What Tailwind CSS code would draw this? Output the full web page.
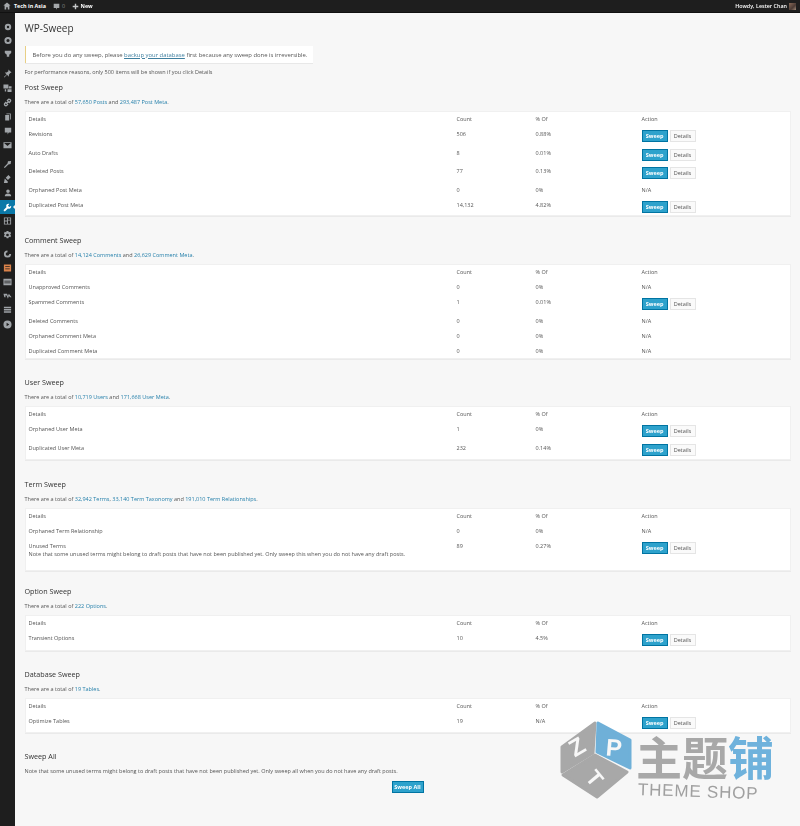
<!DOCTYPE html>
<html lang="en">
<head>
<meta charset="utf-8">
<title>WP-Sweep</title>
<script src="https://cdn.jsdelivr.net/npm/@tailwindcss/browser@4"></script>
</head>
<body class="relative w-[800px] h-[826px] overflow-hidden bg-[#f7f7f7] font-['Open_Sans',sans-serif] text-[5.500px] leading-[8px] text-[#555] blur-[0.3px]">

<header class="h-[13px] bg-[#1e1e1e] border-b border-b-[#111] flex items-center pl-[3px] pr-[4px] text-white text-[5.400px] font-semibold">
  <svg class="w-[8px] h-[8px] text-[#a5a8ab]" viewBox="0 0 20 20" fill="currentColor"><path d="M10 1 1 9h3v10h4v-6h4v6h4V9h3z"/></svg>
  <span class="ml-[3px] font-bold">Tech in Asia</span>
  <svg class="ml-[7px] w-[7px] h-[7px] text-[#a5a8ab]" viewBox="0 0 20 20" fill="currentColor"><path d="M2 2h16v12h-6l-3 5v-5H2z"/></svg>
  <span class="ml-[2px] text-[#888] font-normal">0</span>
  <svg class="ml-[7px] w-[7px] h-[7px] text-[#c5c7c9]" viewBox="0 0 20 20" fill="currentColor"><path d="M8 2h4v6h6v4h-6v6H8v-6H2V8h6z"/></svg>
  <span class="ml-[1.500px] font-bold">New</span>
  <span class="ml-auto font-semibold">Howdy, Lester Chan</span>
  <span class="ml-[2px] w-[7px] h-[7px] bg-[linear-gradient(135deg,#8a6a58,#4a3a34_60%,#a08a78)]"></span>
</header>

<div class="flex">
  <nav class="w-[15px] h-[813px] shrink-0 bg-[#1e1e1e] flex flex-col items-center pt-[7px] text-[#a0a4a8]">
    <svg class="w-[8px] h-[14px]" viewBox="0 0 20 20" fill="currentColor"><path fill-rule="evenodd" d="M10 2a8 8 0 1 0 0 16 8 8 0 0 0 0-16zm0 5a3 3 0 1 1 0 6 3 3 0 0 1 0-6z"/></svg>
    <svg class="w-[8px] h-[13px]" viewBox="0 0 20 20" fill="currentColor"><path fill-rule="evenodd" d="M10 1a9 9 0 1 0 0 18 9 9 0 0 0 0-18zm0 5a4 4 0 1 1 0 8 4 4 0 0 1 0-8z"/></svg>
    <svg class="w-[8px] h-[13px]" viewBox="0 0 20 20" fill="currentColor"><path d="M2 3h16v6l-5 4v5H7v-5L2 9z"/></svg>
    <div class="h-[6px]"></div>
    <svg class="w-[9px] h-[15px]" viewBox="0 0 20 20" fill="currentColor"><path d="M12 1l7 7-3 1-3 4 0 4-4-4-6 6-1-1 6-6-4-4h4l4-3z"/></svg>
    <svg class="w-[9px] h-[14px]" viewBox="0 0 20 20" fill="currentColor"><path fill-rule="evenodd" d="M1 2h11v9H1zm3 11h3v5H4zm6 0h9v6h-9zm3-7h6v5h-6z"/></svg>
    <svg class="w-[9px] h-[15px]" viewBox="0 0 20 20" fill="none" stroke="currentColor" stroke-width="3"><path d="M9 7l2-3a3 3 0 0 1 5 4l-3 3M11 13l-2 3a3 3 0 0 1-5-4l3-3M7 13l6-6"/></svg>
    <svg class="w-[8px] h-[14px]" viewBox="0 0 20 20" fill="currentColor"><path d="M6 1h11v15h-2V3H6zM3 5h10v14H3z"/></svg>
    <svg class="w-[8px] h-[14px]" viewBox="0 0 20 20" fill="currentColor"><path d="M2 2h16v12h-6l-3 5v-5H2z"/></svg>
    <svg class="w-[9px] h-[14px]" viewBox="0 0 20 20" fill="currentColor"><path fill-rule="evenodd" d="M1 4h18v13H1zm2 2 7 6 7-6v-.5H3z"/></svg>
    <div class="h-[5px]"></div>
    <svg class="w-[9px] h-[15px]" viewBox="0 0 20 20" fill="currentColor"><path d="M18 2l-7 1-1 5-8 8 2 2 8-8 5-1z"/></svg>
    <svg class="w-[9px] h-[14px]" viewBox="0 0 20 20" fill="currentColor"><path d="M12 1l5 5-6 6-5-5zM4 9l7 7-1 3H2z"/></svg>
    <svg class="w-[8px] h-[14px]" viewBox="0 0 20 20" fill="currentColor"><path d="M10 1a4.500 4.500 0 1 0 0 9 4.500 4.500 0 0 0 0-9zM2 18c0-5 3-7 8-7s8 2 8 7z"/></svg>
    <div class="relative w-[15px] h-[14px] bg-[#0a78a8] flex items-center justify-center text-white">
      <svg class="w-[9px] h-[9px]" viewBox="0 0 20 20" fill="currentColor"><path d="M18 6l-4 3-3-3 3-4c-3-1-7 1-7 5l1 2-7 7 3 3 7-7 2 1c4 0 6-4 5-7z"/></svg>
      <span class="absolute right-0 top-[4.500px] w-0 h-0 border-y-[2.500px] border-y-transparent border-r-[2.500px] border-r-[#f7f7f7]"></span>
    </div>
    <svg class="w-[9px] h-[14px]" viewBox="0 0 20 20" fill="currentColor"><path fill-rule="evenodd" d="M2 2h16v16H2zm2 2v5h5V4zm7 0v3h5V4zm0 5v7h5V9zm-7 2v5h5v-5z"/></svg>
    <svg class="w-[9px] h-[14px]" viewBox="0 0 20 20" fill="currentColor"><path fill-rule="evenodd" d="M8 1h4l1 3 3-1 2 3-2 3 2 3-2 3-3-1-1 3H8l-1-3-3 1-2-3 2-3-2-3 2-3 3 1zm2 6a3 3 0 1 0 0 6 3 3 0 0 0 0-6z"/></svg>
    <div class="h-[5px]"></div>
    <svg class="w-[9px] h-[14px]" viewBox="0 0 20 20" fill="currentColor"><path fill-rule="evenodd" d="M10 2a8 8 0 1 0 8 8h-4a4 4 0 1 1-4-4z"/></svg>
    <svg class="w-[9px] h-[14px] text-[#d9824a]" viewBox="0 0 20 20" fill="currentColor"><path fill-rule="evenodd" d="M2 2h16v16H2zm3 4v2h10V6zm0 5v2h10v-2z"/></svg>
    <svg class="w-[9px] h-[14px]" viewBox="0 0 20 20" fill="currentColor"><path fill-rule="evenodd" d="M1 3h18v14H1zm2 4v2h14V7zm0 4v2h14v-2z"/></svg>
    <svg class="w-[9px] h-[14px]" viewBox="0 0 20 20" fill="currentColor"><path d="M1 5h8l2 5 2-5 6 8h-3l-3-3-2 6-3-7H5l1 4H3z"/></svg>
    <svg class="w-[9px] h-[14px]" viewBox="0 0 20 20" fill="currentColor"><path d="M2 3h16v3H2zm0 5h16v3H2zm0 5h16v3H2z"/></svg>
    <svg class="w-[9px] h-[15px]" viewBox="0 0 20 20" fill="currentColor"><path fill-rule="evenodd" d="M10 1a9 9 0 1 0 0 18 9 9 0 0 0 0-18zM8 6l6 4-6 4z"/></svg>
  </nav>

  <main class="w-[776px] pl-[9.500px]">
    <h1 class="mt-[9px] text-[10px] leading-[12px] text-[#333]">WP-Sweep</h1>
    <div class="mt-[12px] w-[288px] h-[17px] bg-white border-l-[1.500px] border-l-[#e8cf85] shadow-[0_0.500px_0.500px_rgba(0,0,0,0.06)] pl-[7px] flex items-center text-[5.900px]">
      <p>Before you do any sweep, please <a class="text-[#3f7f9f] underline">backup your database</a> first because any sweep done is irreversible.</p>
    </div>
    <p class="mt-[5px]">For performance reasons, only 500 items will be shown if you click Details</p>

    <h2 class="mt-[6px] text-[7.200px] leading-[10px] font-medium text-[#333]">Post Sweep</h2>
    <p class="mt-[6px]">There are a total of <a class="text-[#2680ab]">57,650 Posts</a> and <a class="text-[#2680ab]">293,487 Post Meta</a>.</p>
    <div class="mt-[5px] w-[766px] bg-white border border-[#f0f0f0] shadow-[0_0.500px_0.500px_rgba(0,0,0,0.05)]">
      <div class="h-[15px] pt-[3px] grid grid-cols-[428px_79px_106px_1fr] pl-[3px]"><span>Details</span><span>Count</span><span>% Of</span><span>Action</span></div>
      <div class="h-[18.500px] pt-[3px] grid grid-cols-[428px_79px_106px_1fr] pl-[3px]"><span>Revisions</span><span>506</span><span>0.88%</span><span class="flex gap-[2px]"><a class="w-[26px] h-[12px] bg-[#2ea2cc] border border-[#0074a2] text-white font-bold flex items-center justify-center">Sweep</a><a class="w-[26px] h-[12px] bg-[#fafafa] border border-[#e5e5e5] flex items-center justify-center">Details</a></span></div>
      <div class="h-[18.500px] pt-[3px] grid grid-cols-[428px_79px_106px_1fr] pl-[3px]"><span>Auto Drafts</span><span>8</span><span>0.01%</span><span class="flex gap-[2px]"><a class="w-[26px] h-[12px] bg-[#2ea2cc] border border-[#0074a2] text-white font-bold flex items-center justify-center">Sweep</a><a class="w-[26px] h-[12px] bg-[#fafafa] border border-[#e5e5e5] flex items-center justify-center">Details</a></span></div>
      <div class="h-[18.500px] pt-[3px] grid grid-cols-[428px_79px_106px_1fr] pl-[3px]"><span>Deleted Posts</span><span>77</span><span>0.13%</span><span class="flex gap-[2px]"><a class="w-[26px] h-[12px] bg-[#2ea2cc] border border-[#0074a2] text-white font-bold flex items-center justify-center">Sweep</a><a class="w-[26px] h-[12px] bg-[#fafafa] border border-[#e5e5e5] flex items-center justify-center">Details</a></span></div>
      <div class="h-[15px] pt-[3px] grid grid-cols-[428px_79px_106px_1fr] pl-[3px]"><span>Orphaned Post Meta</span><span>0</span><span>0%</span><span>N/A</span></div>
      <div class="h-[17.500px] pt-[3px] grid grid-cols-[428px_79px_106px_1fr] pl-[3px]"><span>Duplicated Post Meta</span><span>14,132</span><span>4.82%</span><span class="flex gap-[2px]"><a class="w-[26px] h-[12px] bg-[#2ea2cc] border border-[#0074a2] text-white font-bold flex items-center justify-center">Sweep</a><a class="w-[26px] h-[12px] bg-[#fafafa] border border-[#e5e5e5] flex items-center justify-center">Details</a></span></div>
    </div>

    <h2 class="mt-[19px] text-[7.200px] leading-[10px] font-medium text-[#333]">Comment Sweep</h2>
    <p class="mt-[6px]">There are a total of <a class="text-[#2680ab]">14,124 Comments</a> and <a class="text-[#2680ab]">26,629 Comment Meta</a>.</p>
    <div class="mt-[5px] w-[766px] bg-white border border-[#f0f0f0] shadow-[0_0.500px_0.500px_rgba(0,0,0,0.05)]">
      <div class="h-[15px] pt-[3px] grid grid-cols-[428px_79px_106px_1fr] pl-[3px]"><span>Details</span><span>Count</span><span>% Of</span><span>Action</span></div>
      <div class="h-[15px] pt-[3px] grid grid-cols-[428px_79px_106px_1fr] pl-[3px]"><span>Unapproved Comments</span><span>0</span><span>0%</span><span>N/A</span></div>
      <div class="h-[18.500px] pt-[3px] grid grid-cols-[428px_79px_106px_1fr] pl-[3px]"><span>Spammed Comments</span><span>1</span><span>0.01%</span><span class="flex gap-[2px]"><a class="w-[26px] h-[12px] bg-[#2ea2cc] border border-[#0074a2] text-white font-bold flex items-center justify-center">Sweep</a><a class="w-[26px] h-[12px] bg-[#fafafa] border border-[#e5e5e5] flex items-center justify-center">Details</a></span></div>
      <div class="h-[15px] pt-[3px] grid grid-cols-[428px_79px_106px_1fr] pl-[3px]"><span>Deleted Comments</span><span>0</span><span>0%</span><span>N/A</span></div>
      <div class="h-[15px] pt-[3px] grid grid-cols-[428px_79px_106px_1fr] pl-[3px]"><span>Orphaned Comment Meta</span><span>0</span><span>0%</span><span>N/A</span></div>
      <div class="h-[14.500px] pt-[3px] grid grid-cols-[428px_79px_106px_1fr] pl-[3px]"><span>Duplicated Comment Meta</span><span>0</span><span>0%</span><span>N/A</span></div>
    </div>

    <h2 class="mt-[18px] text-[7.200px] leading-[10px] font-medium text-[#333]">User Sweep</h2>
    <p class="mt-[6px]">There are a total of <a class="text-[#2680ab]">10,719 Users</a> and <a class="text-[#2680ab]">171,668 User Meta</a>.</p>
    <div class="mt-[5px] w-[766px] bg-white border border-[#f0f0f0] shadow-[0_0.500px_0.500px_rgba(0,0,0,0.05)]">
      <div class="h-[15px] pt-[3px] grid grid-cols-[428px_79px_106px_1fr] pl-[3px]"><span>Details</span><span>Count</span><span>% Of</span><span>Action</span></div>
      <div class="h-[18.500px] pt-[3px] grid grid-cols-[428px_79px_106px_1fr] pl-[3px]"><span>Orphaned User Meta</span><span>1</span><span>0%</span><span class="flex gap-[2px]"><a class="w-[26px] h-[12px] bg-[#2ea2cc] border border-[#0074a2] text-white font-bold flex items-center justify-center">Sweep</a><a class="w-[26px] h-[12px] bg-[#fafafa] border border-[#e5e5e5] flex items-center justify-center">Details</a></span></div>
      <div class="h-[18.500px] pt-[3px] grid grid-cols-[428px_79px_106px_1fr] pl-[3px]"><span>Duplicated User Meta</span><span>232</span><span>0.14%</span><span class="flex gap-[2px]"><a class="w-[26px] h-[12px] bg-[#2ea2cc] border border-[#0074a2] text-white font-bold flex items-center justify-center">Sweep</a><a class="w-[26px] h-[12px] bg-[#fafafa] border border-[#e5e5e5] flex items-center justify-center">Details</a></span></div>
    </div>

    <h2 class="mt-[19px] text-[7.200px] leading-[10px] font-medium text-[#333]">Term Sweep</h2>
    <p class="mt-[6px]">There are a total of <a class="text-[#2680ab]">32,942 Terms</a>, <a class="text-[#2680ab]">33,140 Term Taxonomy</a> and <a class="text-[#2680ab]">191,010 Term Relationships</a>.</p>
    <div class="mt-[5px] w-[766px] bg-white border border-[#f0f0f0] shadow-[0_0.500px_0.500px_rgba(0,0,0,0.05)]">
      <div class="h-[15px] pt-[3px] grid grid-cols-[428px_79px_106px_1fr] pl-[3px]"><span>Details</span><span>Count</span><span>% Of</span><span>Action</span></div>
      <div class="h-[15px] pt-[3px] grid grid-cols-[428px_79px_106px_1fr] pl-[3px]"><span>Orphaned Term Relationship</span><span>0</span><span>0%</span><span>N/A</span></div>
      <div class="h-[31px] pt-[3px] grid grid-cols-[428px_79px_106px_1fr] pl-[3px]"><span>Unused Terms<br><span class="whitespace-nowrap">Note that some unused terms might belong to draft posts that have not been published yet. Only sweep this when you do not have any draft posts.</span></span><span>89</span><span>0.27%</span><span class="flex gap-[2px]"><a class="w-[26px] h-[12px] bg-[#2ea2cc] border border-[#0074a2] text-white font-bold flex items-center justify-center">Sweep</a><a class="w-[26px] h-[12px] bg-[#fafafa] border border-[#e5e5e5] flex items-center justify-center">Details</a></span></div>
    </div>

    <h2 class="mt-[15px] text-[7.200px] leading-[10px] font-medium text-[#333]">Option Sweep</h2>
    <p class="mt-[6px]">There are a total of <a class="text-[#2680ab]">222 Options</a>.</p>
    <div class="mt-[5px] w-[766px] bg-white border border-[#f0f0f0] shadow-[0_0.500px_0.500px_rgba(0,0,0,0.05)]">
      <div class="h-[15px] pt-[3px] grid grid-cols-[428px_79px_106px_1fr] pl-[3px]"><span>Details</span><span>Count</span><span>% Of</span><span>Action</span></div>
      <div class="h-[18.500px] pt-[3px] grid grid-cols-[428px_79px_106px_1fr] pl-[3px]"><span>Transient Options</span><span>10</span><span>4.5%</span><span class="flex gap-[2px]"><a class="w-[26px] h-[12px] bg-[#2ea2cc] border border-[#0074a2] text-white font-bold flex items-center justify-center">Sweep</a><a class="w-[26px] h-[12px] bg-[#fafafa] border border-[#e5e5e5] flex items-center justify-center">Details</a></span></div>
    </div>

    <h2 class="mt-[18px] text-[7.200px] leading-[10px] font-medium text-[#333]">Database Sweep</h2>
    <p class="mt-[6px]">There are a total of <a class="text-[#2680ab]">19 Tables</a>.</p>
    <div class="mt-[5px] w-[766px] bg-white border border-[#f0f0f0] shadow-[0_0.500px_0.500px_rgba(0,0,0,0.05)]">
      <div class="h-[15px] pt-[3px] grid grid-cols-[428px_79px_106px_1fr] pl-[3px]"><span>Details</span><span>Count</span><span>% Of</span><span>Action</span></div>
      <div class="h-[18.500px] pt-[3px] grid grid-cols-[428px_79px_106px_1fr] pl-[3px]"><span>Optimize Tables</span><span>19</span><span>N/A</span><span class="flex gap-[2px]"><a class="w-[26px] h-[12px] bg-[#2ea2cc] border border-[#0074a2] text-white font-bold flex items-center justify-center">Sweep</a><a class="w-[26px] h-[12px] bg-[#fafafa] border border-[#e5e5e5] flex items-center justify-center">Details</a></span></div>
    </div>

    <h2 class="mt-[18px] text-[7.200px] leading-[10px] font-medium text-[#333]">Sweep All</h2>
    <p class="mt-[6px]">Note that some unused terms might belong to draft posts that have not been published yet. Only sweep all when you do not have any draft posts.</p>
    <div class="mt-[6px] w-[766px] flex justify-center"><a class="w-[32px] h-[12px] bg-[#2ea2cc] border border-[#0074a2] text-white font-bold flex items-center justify-center">Sweep All</a></div>
  </main>
</div>

<div class="absolute left-[558px] top-[720px] w-[225px] h-[80px]">
  <svg class="absolute left-0 top-0 w-[76px] h-[80px]" viewBox="0 0 76 80">
    <path d="M37 3 4 27V52L35 33z" fill="#a8a8a8" stroke="#a8a8a8" stroke-width="3" stroke-linejoin="round"/>
    <path d="M40 3 72 20V48L39 32z" fill="#6fb0d8" stroke="#6fb0d8" stroke-width="3" stroke-linejoin="round"/>
    <path d="M5 55 37 35 69 52 39 77z" fill="#a8a8a8" stroke="#a8a8a8" stroke-width="3" stroke-linejoin="round"/>
    <text x="19" y="35" font-family="Liberation Sans, sans-serif" font-weight="700" font-size="24" fill="#f7f7f7" transform="rotate(-30 19 27)" text-anchor="middle">Z</text>
    <text x="56" y="36" font-family="Liberation Sans, sans-serif" font-weight="700" font-size="24" fill="#f7f7f7" transform="rotate(5 56 28)" text-anchor="middle">P</text>
    <text x="37" y="66" font-family="Liberation Sans, sans-serif" font-weight="700" font-size="22" fill="#f7f7f7" transform="rotate(50 37 58)" text-anchor="middle">T</text>
  </svg>
  <div class="absolute left-[78px] top-[11px] flex whitespace-nowrap text-[46px] leading-[48px] font-bold font-['Noto_Sans_CJK_SC',sans-serif] text-[#a8a8a8]"><span>主题</span><span class="text-[#6fb2dc]">铺</span></div>
  <div class="absolute left-[80px] top-[60px] rotate-[2deg] origin-left whitespace-nowrap text-[17px] leading-[19px] tracking-[0.800px] font-['Liberation_Sans',sans-serif] text-[#a0a0a0]">THEME SHOP</div>
</div>

</body>
</html>
